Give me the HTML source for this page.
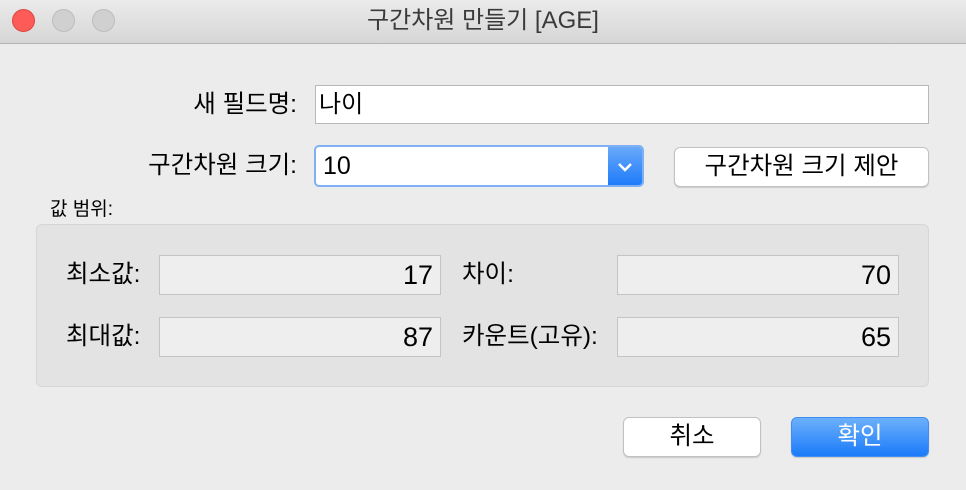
<!DOCTYPE html>
<html><head><meta charset="utf-8"><style>
body{margin:0;width:966px;height:490px;background:#ececec;font-family:"Liberation Sans","Noto Sans CJK KR",sans-serif;color:#000;position:relative;overflow:hidden}
.a{position:absolute}
.tb{left:0;top:0;width:966px;height:43px;background:linear-gradient(#ebebeb,#d6d6d6);border-bottom:1px solid #b4b4b4}
.dot{width:23px;height:23px;border-radius:50%;top:9px}
.t{font-size:24.5px;line-height:30px;height:30px;white-space:nowrap}
.lbl{text-align:right}
.fld{background:#eeeeee;border:1px solid #c4c4c4;box-sizing:border-box;text-align:right;padding-right:7px;font-size:27px;line-height:38px}
.btn{background:#fff;border:1px solid #c2c2c2;border-radius:6px;box-sizing:border-box;text-align:center;font-size:24.5px;box-shadow:0 1px 1px rgba(0,0,0,.15);white-space:nowrap}
</style></head><body>
<div class="a tb"></div>
<div class="a dot" style="left:12px;background:#fc5b57;border:1px solid #de4541;box-sizing:border-box"></div>
<div class="a dot" style="left:52px;background:#d0d0d0;border:1px solid #bcbcbc;box-sizing:border-box"></div>
<div class="a dot" style="left:92px;background:#d0d0d0;border:1px solid #bcbcbc;box-sizing:border-box"></div>
<div class="a" style="left:0;width:966px;top:6px;text-align:center;font-size:24px;color:#3a3a3a;line-height:30px">구간차원 만들기 [AGE]</div>

<div class="a t lbl" style="right:669px;top:90px">새 필드명:</div>
<div class="a" style="left:315px;top:85px;width:614px;height:39px;background:#fff;border:1px solid #b8b8b8;box-sizing:border-box;font-size:24px;line-height:37px;padding-left:3px">나이</div>

<div class="a t lbl" style="right:669px;top:151px">구간차원 크기:</div>
<div class="a" style="left:314px;top:145px;width:330px;height:42px;border-radius:5px;background:#7fb0f5;box-sizing:border-box;padding:2px">
 <div style="position:relative;height:38px;background:#fff;border-radius:3px;overflow:hidden">
  <div style="position:absolute;left:7px;top:0;font-size:25px;line-height:38px">10</div>
  <div style="position:absolute;right:0;top:0;width:34px;height:38px;background:linear-gradient(#69a8fa,#1e7cf9)">
   <svg width="34" height="38"><path d="M11 17 L17 23 L23 17" stroke="#fff" stroke-width="2.5" fill="none"/></svg>
  </div>
 </div>
</div>
<div class="a btn" style="left:674px;top:147px;width:255px;height:40px;line-height:38px">구간차원 크기 제안</div>

<div class="a" style="left:50px;top:197px;font-size:19px;line-height:26px">값 범위:</div>
<div class="a" style="left:36px;top:224px;width:893px;height:163px;background:#e3e3e3;border:1px solid #d6d6d6;border-radius:6px;box-sizing:border-box"></div>

<div class="a t" style="left:66px;top:260px">최소값:</div>
<div class="a fld" style="left:159px;top:255px;width:282px;height:40px">17</div>
<div class="a t" style="left:462px;top:260px">차이:</div>
<div class="a fld" style="left:617px;top:255px;width:282px;height:40px">70</div>

<div class="a t" style="left:66px;top:322px">최대값:</div>
<div class="a fld" style="left:159px;top:317px;width:282px;height:40px">87</div>
<div class="a t" style="left:462px;top:322px">카운트(고유):</div>
<div class="a fld" style="left:617px;top:317px;width:282px;height:40px">65</div>

<div class="a btn" style="left:623px;top:417px;width:138px;height:40px;line-height:38px">취소</div>
<div class="a btn" style="left:791px;top:417px;width:138px;height:40px;line-height:38px;background:linear-gradient(#6cb0fb,#1b7bfa);border-color:#3f8ef4;color:#fff">확인</div>
</body></html>
